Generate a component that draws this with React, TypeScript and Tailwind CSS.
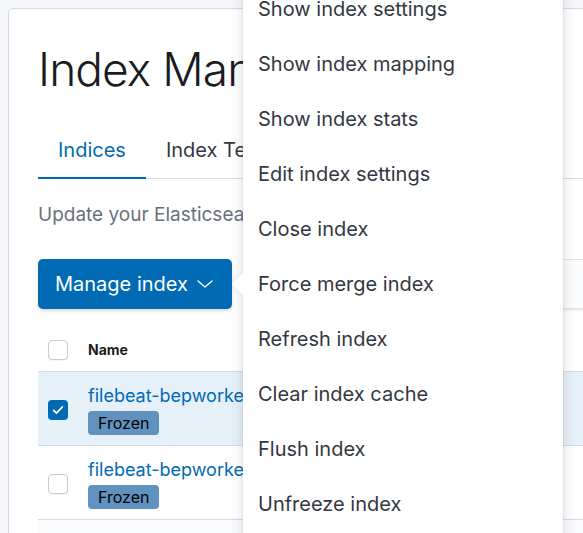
type Row = {
  name: string
  status: string
  selected: boolean
}

const rows: Row[] = [
  { name: 'filebeat-bepworker-2019.10.14', status: 'Frozen', selected: true },
  { name: 'filebeat-bepworker-2019.10.15', status: 'Frozen', selected: false },
]

const actions = [
  'Show index settings',
  'Show index mapping',
  'Show index stats',
  'Edit index settings',
  'Close index',
  'Force merge index',
  'Refresh index',
  'Clear index cache',
  'Flush index',
  'Unfreeze index',
  'Delete index',
]

function Checkbox({ checked }: { checked: boolean }) {
  if (checked) {
    return (
      <span className="flex h-5 w-5 items-center justify-center rounded-[4px] bg-[#006bb4]">
        <svg viewBox="0 0 16 16" className="h-[14px] w-[14px]" fill="none" stroke="white" strokeWidth="2">
          <path d="M3 8.5l3.2 3L13 4.5" strokeLinecap="round" strokeLinejoin="round" />
        </svg>
      </span>
    )
  }
  return <span className="block h-5 w-5 rounded-[4px] border border-[#c9cbcd] bg-white shadow-[0_1px_1px_rgba(0,0,0,0.05)]" />
}

export default function App() {
  return (
    <div className="relative h-[533px] w-full overflow-hidden bg-[#f5f7fa] pl-2 pt-2 font-['Inter',sans-serif]">
      {/* Page card */}
      <div className="h-[600px] w-[760px] rounded-tl-[5px] border border-[#d3dae6] bg-white pl-[29px] pt-[37px]">
        <h1 className="text-[46px] font-light leading-none tracking-[-0.02em] text-[#1a1c21]">Index Management</h1>

        {/* Tabs */}
        <div className="mt-[30px] flex border-b border-[#d3dae6] pr-10">
          <button className="-mb-px border-b-2 border-[#006bb4] px-5 pb-[15px] pt-4 text-[20px] leading-6 text-[#006bb4]">
            Indices
          </button>
          <button className="-mb-px border-b-2 border-transparent px-5 pb-[15px] pt-4 text-[20px] leading-6 text-[#343741]">
            Index Templates
          </button>
        </div>

        <p className="mt-6 w-[500px] overflow-hidden whitespace-nowrap text-[19px] leading-6 text-[#69707d]">
          Update your Elasticsearch indices individually or in bulk.
        </p>

        {/* Toolbar */}
        <div className="mt-8 flex gap-4 pr-6">
          <button className="flex h-[50px] w-[194px] items-center justify-between rounded-[5px] bg-[#006bb4] pl-[17px] pr-[19px] text-[20px] text-white shadow-[0_2px_3px_rgba(0,0,0,0.15)]">
            Manage index
            <svg viewBox="0 0 16 8" className="h-2 w-4" fill="none" stroke="white" strokeWidth="1.4">
              <path d="M1 1l7 6 7-6" strokeLinecap="round" strokeLinejoin="round" />
            </svg>
          </button>
          <div className="h-[50px] flex-1 rounded-[5px] bg-[#fbfcfd] shadow-[0_1px_2px_-1px_rgba(152,162,179,0.2),0_3px_3px_-2px_rgba(152,162,179,0.25),inset_0_0_0_1px_rgba(32,38,47,0.1)]" />
        </div>

        {/* Indices table */}
        <div className="mt-[19px]">
          <div className="flex h-[44px] items-center border-b border-[#d3dae6]">
            <div className="w-[50px] pl-[10px]">
              <Checkbox checked={false} />
            </div>
            <span className="text-[14px] font-bold text-[#1a1c21]">Name</span>
          </div>
          {rows.map((row) => (
            <div
              key={row.name}
              className={[
                'flex items-center border-b border-[#d3dae6] pb-[10px] pt-3',
                row.selected ? 'bg-[#e6f0f8]' : 'bg-white',
              ].join(' ')}
            >
              <div className="w-[50px] pl-[10px]">
                <Checkbox checked={row.selected} />
              </div>
              <div className="flex flex-col items-start">
                <a className="text-[18px] leading-6 text-[#006bb4]">{row.name}</a>
                <span className="mt-[3px] flex h-6 items-center rounded-[4px] bg-[#6092c0] px-[10px] text-[16px] text-black">
                  {row.status}
                </span>
              </div>
            </div>
          ))}
          <div className="h-[74px] bg-[#fafbfd]" />
        </div>
      </div>

      {/* Manage index menu */}
      <div className="absolute left-[243px] top-[-27px] w-[320px] rounded-[5px] bg-white pt-2 shadow-[0_0_14px_rgba(60,66,81,0.18),0_0_2px_rgba(60,66,81,0.2)]">
        <span className="absolute left-[-8px] top-[303px] h-4 w-4 rotate-45 bg-white shadow-[-2px_2px_3px_rgba(60,66,81,0.06)]" />
        <ul className="relative">
          {actions.map((label) => (
            <li key={label} className="flex h-[55px] items-center pl-[15px] text-[20px] leading-6 text-[#343741]">
              {label}
            </li>
          ))}
        </ul>
      </div>
    </div>
  )
}
